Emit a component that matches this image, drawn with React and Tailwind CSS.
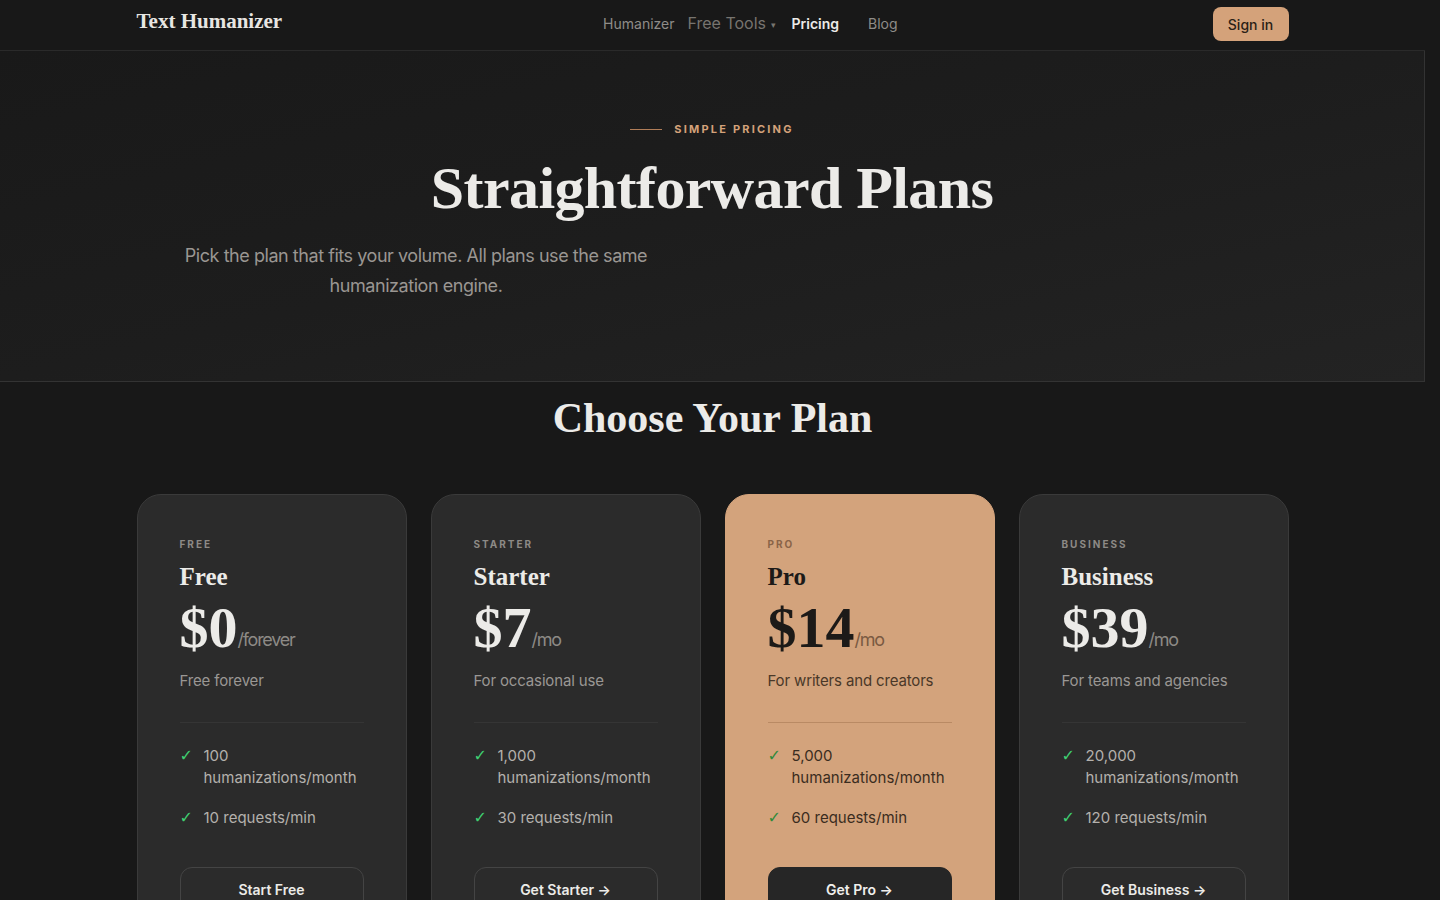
import React from 'react';

const serif = { fontFamily: '"Liberation Serif", "DejaVu Serif", serif' };

const plans = [
  {
    tag: 'FREE',
    name: 'Free',
    price: '$0',
    per: '/forever',
    desc: 'Free forever',
    features: [['100', 'humanizations/month'], ['10 requests/min']],
    cta: 'Start Free',
  },
  {
    tag: 'STARTER',
    name: 'Starter',
    price: '$7',
    per: '/mo',
    desc: 'For occasional use',
    features: [['1,000', 'humanizations/month'], ['30 requests/min']],
    cta: 'Get Starter →',
  },
  {
    tag: 'PRO',
    name: 'Pro',
    price: '$14',
    per: '/mo',
    desc: 'For writers and creators',
    features: [['5,000', 'humanizations/month'], ['60 requests/min']],
    cta: 'Get Pro →',
    featured: true,
  },
  {
    tag: 'BUSINESS',
    name: 'Business',
    price: '$39',
    per: '/mo',
    desc: 'For teams and agencies',
    features: [['20,000', 'humanizations/month'], ['120 requests/min']],
    cta: 'Get Business →',
  },
];

const PlanCard = ({ plan }) => {
  const f = plan.featured;
  return (
    <div
      className={
        'rounded-[24px] border px-[42px] pt-[42px] pb-10 ' +
        (f ? 'bg-[#d3a37c] border-[#d3a37c]' : 'bg-[#2b2b2b] border-[#3a3a3a]')
      }
    >
      <p className={'text-[10px] font-bold tracking-[0.2em] ' + (f ? 'text-[#8a6448]' : 'text-[#8d8a86]')}>{plan.tag}</p>
      <h3 style={serif} className={'mt-[10px] text-[25px] leading-[30px] font-bold ' + (f ? 'text-[#1c1a18]' : 'text-[#ecebe8]')}>
        {plan.name}
      </h3>
      <div className="mt-[8px] flex items-end">
        <span style={serif} className={'text-[58px] leading-[56px] font-bold ' + (f ? 'text-[#1c1a18]' : 'text-[#ecebe8]')}>
          {plan.price}
        </span>
        <span className={'mb-[3px] text-[18px] tracking-[-0.07em] ' + (f ? 'text-[#7a5a42]' : 'text-[#8d8a86]')}>
          {plan.per}
        </span>
      </div>
      <p className={'mt-[14px] text-[15px] tracking-[-0.01em] ' + (f ? 'text-[#4a3828]' : 'text-[#9a9794]')}>{plan.desc}</p>
      <div className={'mt-[29px] h-px ' + (f ? 'bg-[#b98a64]' : 'bg-[#353535]')} />
      <ul className="mt-[22px] space-y-[18px]">
        {plan.features.map((ft, i) => (
          <li key={i} className="flex gap-[12px] text-[15px] leading-[22px]">
            <span
              style={{ fontFamily: '"DejaVu Sans", sans-serif' }}
              className={'w-[12px] text-[16px] font-bold ' + (f ? 'text-[#2f8a3a]' : 'text-[#3fcf72]')}
            >
              ✓
            </span>
            <span className={f ? 'text-[#3a2c20]' : 'text-[#b4b1ad]'}>
              {ft.map((line, j) => (
                <span key={j} className="block">{line}</span>
              ))}
            </span>
          </li>
        ))}
      </ul>
      <button
        className={
          'mt-[38px] w-full h-[46px] rounded-[12px] text-[14px] font-semibold ' +
          (f ? 'bg-[#262626] text-[#f0efec] border border-[#262626]' : 'border border-[#444] text-[#ecebe8] bg-transparent')
        }
      >
        {plan.cta}
      </button>
    </div>
  );
};

export default function App() {
  return (
    <div className="min-h-screen bg-[#181818] text-[#ecebe8]" style={{ fontFamily: 'Inter, "Noto Sans", sans-serif' }}>
      <div className="w-[1425px]">
        <header className="h-[51px] border-b border-[#2a2a2a] bg-[#181818]">
          <div className="mx-auto max-w-[1152px] h-full flex items-center justify-between">
            <span style={serif} className="text-[21px] font-bold text-[#e8e6e2] -mt-[6px]">Text Humanizer</span>
            <nav className="flex items-center -mt-[4px] ml-[6px]">
              <a className="text-[14px] text-[#8f8c88]">Humanizer</a>
              <a className="ml-[13px] text-[16px] text-[#77746f]">
                Free Tools <span className="text-[9px] align-middle">▾</span>
              </a>
              <a className="ml-[16px] text-[14px] font-semibold text-[#ecebe8]">Pricing</a>
              <a className="ml-[29px] text-[14px] text-[#8f8c88]">Blog</a>
            </nav>
            <button className="mt-[-2px] h-[34px] w-[76px] rounded-[8px] bg-[#d4a27a] text-[14px] font-medium text-[#2a1f16]">Sign in</button>
          </div>
        </header>

        <section className="h-[331px] border-b border-r border-[#333] bg-gradient-to-br from-[#191919] via-[#1d1d1d] to-[#232323]">
          <div className="mx-auto max-w-[1152px] pt-[70px]">
            <div className="flex items-center justify-center gap-[12px]">
              <span className="h-px w-[32px] bg-[#b07d58]" />
              <span className="text-[11px] font-bold tracking-[0.2em] text-[#d4a27a]">SIMPLE PRICING</span>
            </div>
            <h1 style={serif} className="mt-[14px] text-center text-[60px] leading-[72px] font-bold tracking-[-0.01em] text-[#ecebe8]">
              Straightforward Plans
            </h1>
            <p className="mt-[17px] max-w-[560px] text-center text-[18px] leading-[30px] tracking-[-0.025em] text-[#9a9692]">
              Pick the plan that fits your volume. All plans use the same humanization engine.
            </p>
          </div>
        </section>

        <main className="mx-auto max-w-[1152px] pt-[12px]">
          <h2 style={serif} className="text-center text-[42px] leading-[48px] font-bold text-[#ecebe8]">Choose Your Plan</h2>
          <div className="mt-[52px] grid grid-cols-4 gap-[24px]">
            {plans.map((p) => (
              <PlanCard key={p.tag} plan={p} />
            ))}
          </div>
        </main>
      </div>
    </div>
  );
}
